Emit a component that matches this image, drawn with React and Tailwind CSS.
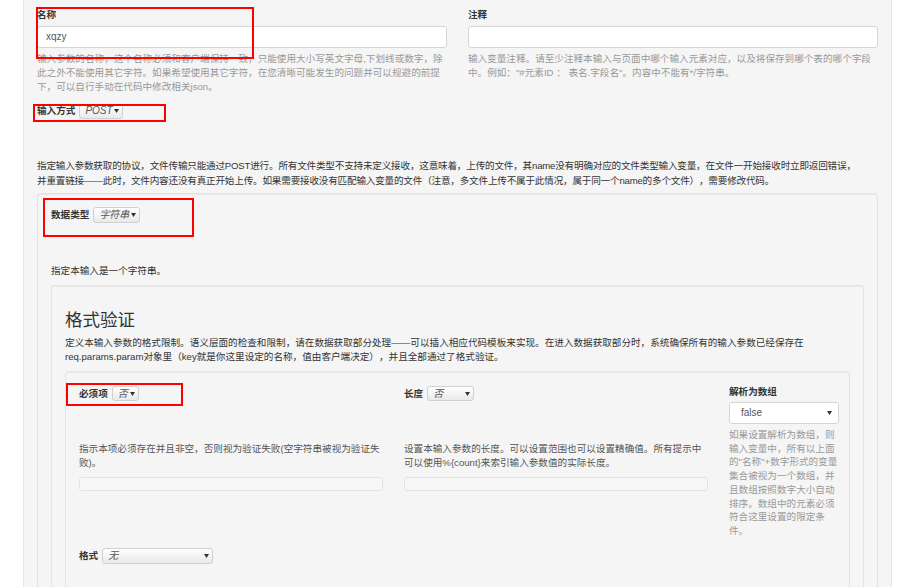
const font = { fontFamily: '"Liberation Sans", "Noto Sans CJK SC", sans-serif' };

function Caret() {
  return (
    <svg width="5" height="4" viewBox="0 0 5 4" className="shrink-0">
      <path d="M0 0h5L2.5 4z" fill="#333" />
    </svg>
  );
}

// bootstrap-ish little select chip
function Pick({ value, className }) {
  return (
    <div
      className={
        "flex items-center justify-between pl-[5px] pr-[3px] rounded-[3px] border border-[#d0d0d0] bg-gradient-to-b from-white to-[#e9e9e9] text-[#555] italic text-[10px] " +
        className
      }
    >
      <span>{value}</span>
      <Caret />
    </div>
  );
}

function Well({ className = "", children }) {
  return (
    <div
      className={
        "border border-[#e3e3e3] rounded-[3px] bg-[#f5f5f5] shadow-[inset_0_1px_1px_rgba(0,0,0,0.05)] p-[13px] " +
        className
      }
    >
      {children}
    </div>
  );
}

const lengthHelp =
  "设置本输入参数的长度。可以设置范围也可以设置精确值。所有提示中可以使用%{count}来索引输入参数值的实际长度。";

export default function App() {
  return (
    <div
      style={font}
      className="relative w-[900px] h-[587px] overflow-hidden bg-white text-[9.6px] leading-[14px] text-[#333] [text-spacing-trim:space-all]"
    >
      <div className="ml-[23px] w-[869px] h-full bg-[#f5f5f5] border-x border-[#e6e6e6] px-[13px] pt-[8px]">
        {/* name / comment */}
        <div className="grid grid-cols-[410px_410px] gap-x-[21px]">
          <div>
            <div className="font-bold">名称</div>
            <div className="mt-[4px] h-[22px] bg-white border border-[#d6d6d6] rounded-[3px] flex items-center pl-[8px] text-[#555] text-[10px]">
              xqzy
            </div>
            <p className="mt-[4px] text-[#999]">
              输入参数的名称，这个名称必须和客户端保持一致，只能使用大小写英文字母,下划线或数字，除此之外不能使用其它字符。如果希望使用其它字符，在您清晰可能发生的问题并可以规避的前提下，可以自行手动在代码中修改相关json。
            </p>
          </div>
          <div>
            <div className="font-bold">注释</div>
            <div className="mt-[4px] h-[22px] bg-white border border-[#d6d6d6] rounded-[3px]" />
            <p className="mt-[4px] text-[#999]">
              输入变量注释。请至少注释本输入与页面中哪个输入元素对应，以及将保存到哪个表的哪个字段中。例如："#元素ID ： 表名.字段名"。内容中不能有*/字符串。
            </p>
          </div>
        </div>

        <div className="mt-[9.5px] h-[15px] flex items-center gap-[4px]">
          <span className="font-bold">输入方式</span>
          <Pick value="POST" className="w-[44px] h-[15px]" />
        </div>

        <p className="mt-[39px] pr-[16px] leading-[15px] tracking-[-0.2px]">
          指定输入参数获取的协议，文件传输只能通过POST进行。所有文件类型不支持未定义接收，这意味着，上传的文件，其name没有明确对应的文件类型输入变量，在文件一开始接收时立即返回错误，并重置链接——此时，文件内容还没有真正开始上传。如果需要接收没有匹配输入变量的文件（注意，多文件上传不属于此情况，属于同一个name的多个文件），需要修改代码。
        </p>

        {/* data type */}
        <Well className="mt-[5.5px] pb-[80px]">
          <div className="h-[16px] flex items-center gap-[4px]">
            <span className="font-bold">数据类型</span>
            <Pick value="字符串" className="w-[47px] h-[16px]" />
          </div>
          <p className="mt-[41px]">指定本输入是一个字符串。</p>

          <Well className="mt-[7px] pb-[60px]">
            <h3 className="mt-[9px] text-[17.5px] leading-[24px]">格式验证</h3>
            <p className="mt-[4px]">
              定义本输入参数的格式限制。语义层面的检查和限制，请在数据获取部分处理——可以插入相应代码模板来实现。在进入数据获取部分时，系统确保所有的输入参数已经保存在req.params.param对象里（key就是你这里设定的名称，值由客户端决定），并且全部通过了格式验证。
            </p>

            <Well className="mt-[7px] pb-[60px]">
              <div className="grid grid-cols-[304px_304px_110px] gap-x-[21px]">
                <div>
                  <div className="mt-[1px] h-[15px] flex items-center gap-[4px]">
                    <span className="font-bold">必须项</span>
                    <Pick value="否" className="w-[27px] h-[15px]" />
                  </div>
                  <p className="mt-[41px] text-[#555]">
                    指示本项必须存在并且非空，否则视为验证失败(空字符串被视为验证失败)。
                  </p>
                  <div className="mt-[7px] h-[14px] rounded-[3px] border border-[#e2e2e2] bg-[#f7f7f7]" />
                </div>
                <div>
                  <div className="mt-[1px] h-[15px] flex items-center gap-[4px]">
                    <span className="font-bold">长度</span>
                    <Pick value="否" className="w-[47px] h-[15px]" />
                  </div>
                  <p className="mt-[41px] text-[#555]">{lengthHelp}</p>
                  <div className="mt-[7px] h-[14px] rounded-[3px] border border-[#e2e2e2] bg-[#f7f7f7]" />
                </div>
                <div>
                  <div className="font-bold">解析为数组</div>
                  <div className="mt-[3px] h-[22px] bg-white border border-[#d6d6d6] rounded-[3px] flex items-center justify-between pl-[11px] pr-[6px] text-[#555] text-[10px]">
                    <span>false</span>
                    <Caret />
                  </div>
                  <p className="mt-[4px] leading-[13.7px] text-[#999]">
                    如果设置解析为数组，则输入变量中，所有以上面的"名称"+数字形式的变量集合被视为一个数组，并且数组按照数字大小自动排序。数组中的元素必须符合这里设置的限定条件。
                  </p>
                </div>
              </div>

              <div className="mt-[10px] h-[16px] flex items-center gap-[4px]">
                <span className="font-bold">格式</span>
                <Pick value="无" className="w-[111px] h-[16px]" />
              </div>
            </Well>
          </Well>
        </Well>
      </div>

      {/* red annotation boxes */}
      <div className="absolute left-[36px] top-[7px] w-[218px] h-[52px] border-2 border-[#f00]" />
      <div className="absolute left-[33px] top-[104px] w-[133px] h-[18px] border-2 border-[#f00]" />
      <div className="absolute left-[43px] top-[198px] w-[151px] h-[39px] border-2 border-[#f00]" />
      <div className="absolute left-[66px] top-[383px] w-[117px] h-[23px] border-2 border-[#f00]" />
    </div>
  );
}
